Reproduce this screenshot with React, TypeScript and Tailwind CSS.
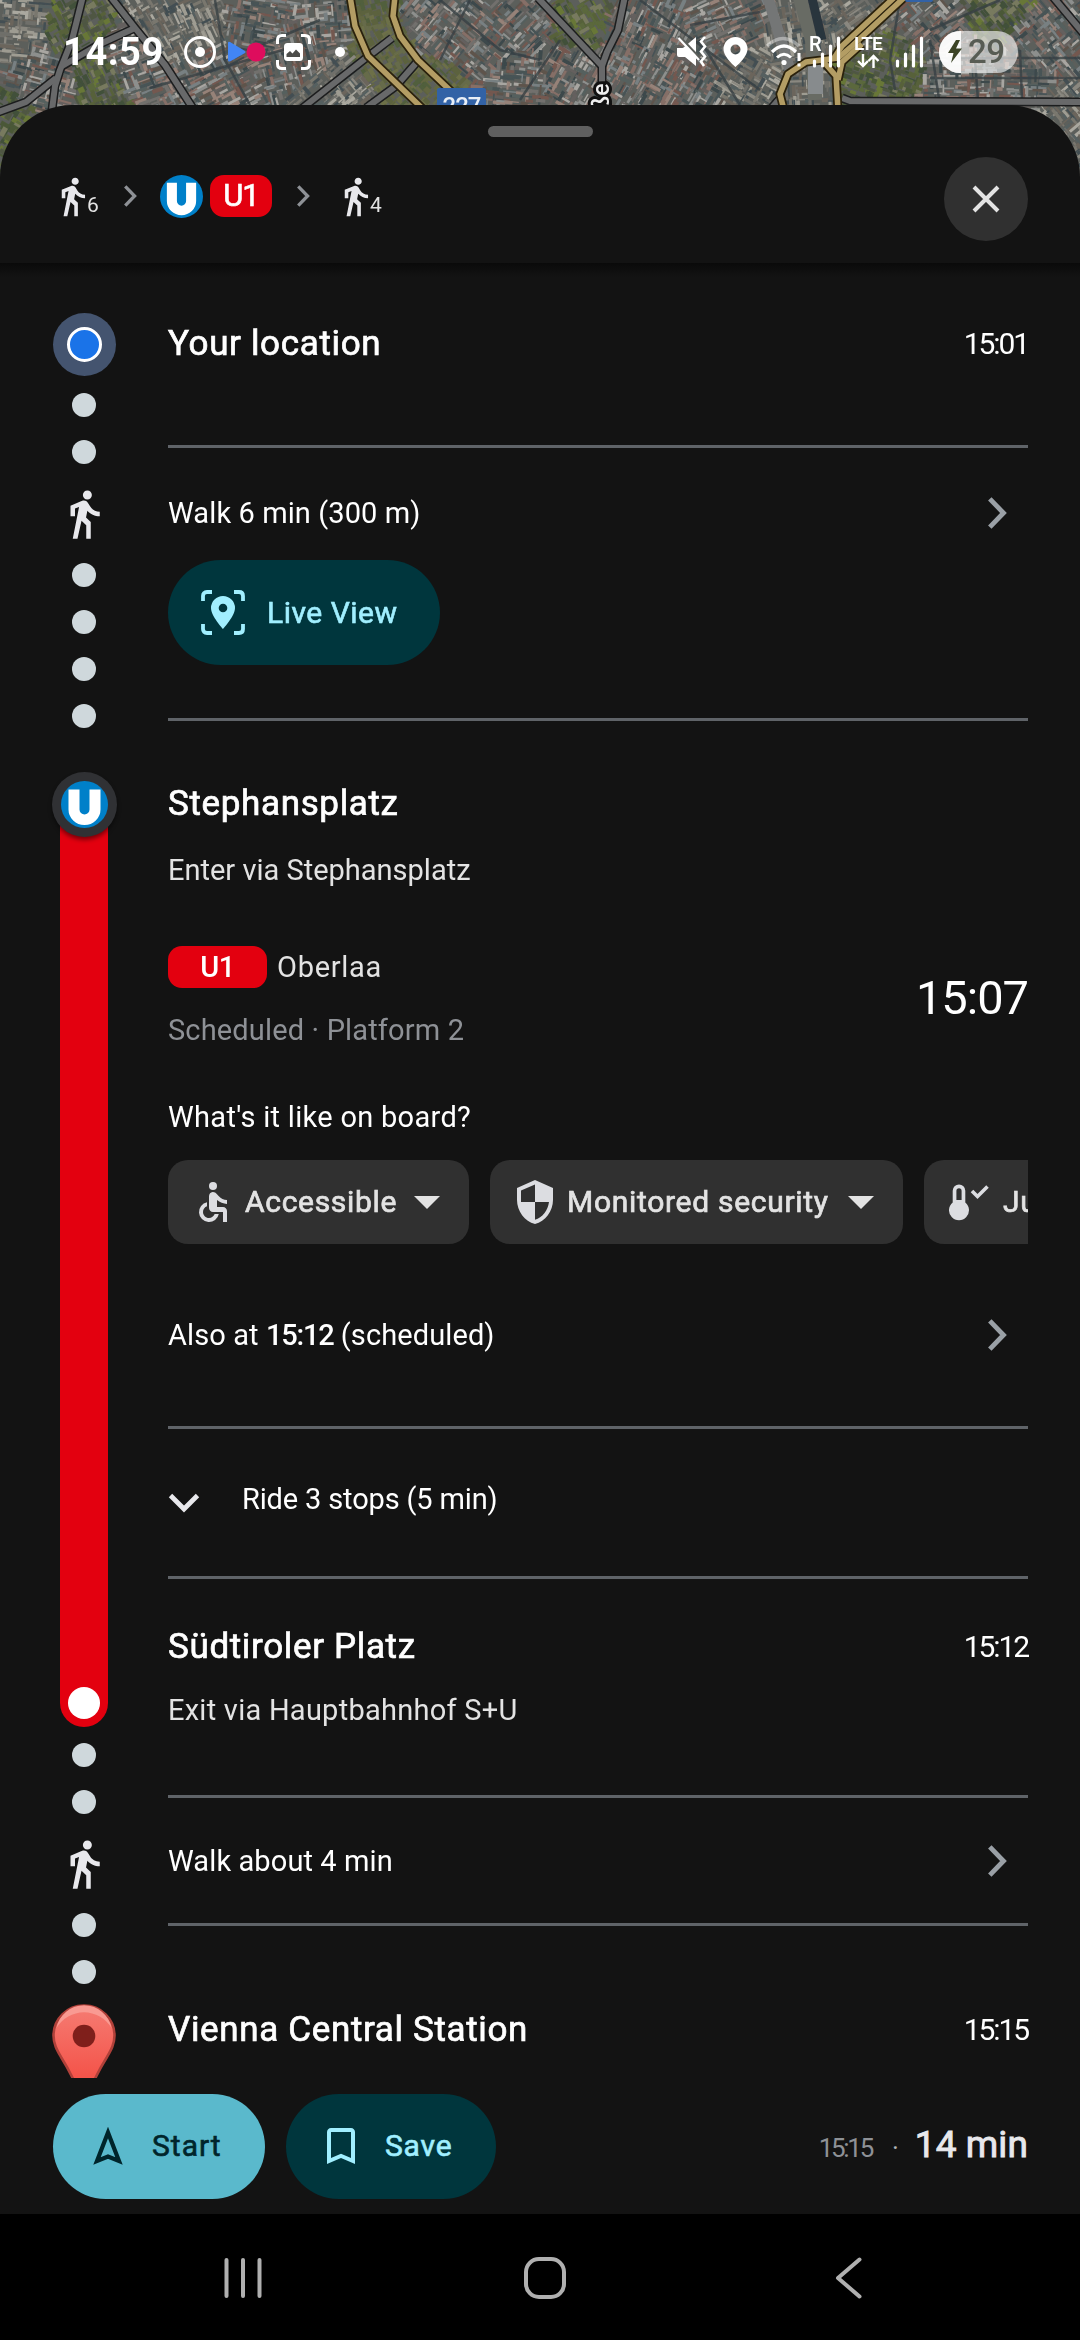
import React from "react";
import { MdAccessible, MdBookmarkBorder, MdDirectionsWalk, MdSecurity } from "react-icons/md";

/* ---------- Satellite map ---------- */

type Hood = { x: number; y: number; a: number; tone: "roof" | "pale" | "green" | "canal" };

const HOODS: Hood[] = [
  { x: 15, y: 25, a: 5, tone: "pale" },
  { x: 45, y: 80, a: 15, tone: "roof" },
  { x: 80, y: 32, a: 60, tone: "green" },
  { x: 10, y: 130, a: 30, tone: "green" },
  { x: 100, y: 75, a: 65, tone: "green" },
  { x: 125, y: 60, a: -20, tone: "roof" },
  { x: 160, y: 20, a: 60, tone: "pale" },
  { x: 190, y: 25, a: 65, tone: "pale" },
  { x: 215, y: 80, a: -28, tone: "roof" },
  { x: 260, y: 20, a: 10, tone: "roof" },
  { x: 300, y: 55, a: 75, tone: "roof" },
  { x: 330, y: 90, a: -40, tone: "pale" },
  { x: 372, y: 10, a: 75, tone: "canal" },
  { x: 385, y: 48, a: 60, tone: "canal" },
  { x: 425, y: 92, a: 45, tone: "canal" },
  { x: 330, y: 15, a: -5, tone: "roof" },
  { x: 430, y: 20, a: -50, tone: "roof" },
  { x: 480, y: 40, a: 40, tone: "roof" },
  { x: 520, y: 85, a: 5, tone: "roof" },
  { x: 530, y: 15, a: -45, tone: "roof" },
  { x: 573, y: 15, a: 60, tone: "green" },
  { x: 570, y: 80, a: -60, tone: "roof" },
  { x: 640, y: 30, a: -65, tone: "roof" },
  { x: 690, y: 80, a: -60, tone: "roof" },
  { x: 730, y: 25, a: -25, tone: "roof" },
  { x: 750, y: 80, a: 30, tone: "pale" },
  { x: 800, y: 40, a: 80, tone: "pale" },
  { x: 815, y: 90, a: 88, tone: "pale" },
  { x: 860, y: 15, a: -35, tone: "pale" },
  { x: 855, y: 82, a: 20, tone: "green" },
  { x: 890, y: 60, a: 20, tone: "green" },
  { x: 930, y: 20, a: -40, tone: "roof" },
  { x: 960, y: 80, a: 0, tone: "roof" },
  { x: 1020, y: 85, a: 2, tone: "roof" },
  { x: 1000, y: 5, a: 50, tone: "green" },
  { x: 1040, y: 40, a: 50, tone: "roof" },
  { x: 1065, y: 120, a: 50, tone: "pale" },
];

const TONES: Record<Hood["tone"], string[]> = {
  roof: ["#8b7169", "#9c857c", "#66605f", "#3a464b", "#465257", "#74726f", "#929492", "#775850", "#56605f", "#b0ada8", "#5f534c", "#7b8386"],
  pale: ["#8f8c84", "#a5a298", "#72716c", "#566062", "#7d7971", "#424e52", "#b2afa6", "#6e665d"],
  green: ["#4a5836", "#5b693a", "#6a7a36", "#414f37", "#586238", "#7b7d60", "#4f5742"],
  canal: ["#65683f", "#5d633c", "#6f7247", "#515f3a", "#686c48"],
};

function makeRoofs() {
  let s = 90217;
  const rnd = () => {
    s = (s * 1664525 + 1013904223) % 4294967296;
    return s / 4294967296;
  };
  const out: { x: number; y: number; w: number; h: number; a: number; c: string }[] = [];
  for (let gy = 0; gy < 185; gy += 5) {
    for (let gx = 0; gx < 1084; gx += 6) {
      if (gy > 106 && gx > 70 && gx < 1010) continue;
      const x = gx + rnd() * 6;
      const y = gy + rnd() * 5;
      let best = HOODS[0];
      let d = Infinity;
      for (const h of HOODS) {
        const q = (h.x - x) ** 2 + (h.y - y) ** 2;
        if (q < d) {
          d = q;
          best = h;
        }
      }
      const t = TONES[best.tone];
      const soft = best.tone === "canal" || best.tone === "green";
      const cross = rnd() > 0.7 ? 90 : 0;
      out.push({
        x,
        y,
        w: 5 + rnd() * (soft ? 6 : 12),
        h: 1.4 + rnd() * (soft ? 5 : 2.6),
        a: best.a + cross,
        c: t[Math.floor(rnd() * t.length)],
      });
    }
  }
  return out;
}

const ROOFS = makeRoofs();

const GREY_ROADS = [
  "M83 -4L72 40L60 70L55 86L52 110",
  "M56 78L26 102L-4 113",
  "M110 -4L135 28L165 65L194 110",
  "M135 28L100 44L62 66",
  "M300 110L366 58L392 38",
  "M417 62L396 86L366 108",
  "M538 -2L570 32L602 66",
  "M625 -4L618 30L607 52L602 66L602 90",
  "M842 98L850 101L1084 102",
  "M770 110L782 96",
  "M1053 -3L1084 34",
];

const GOLD_ROADS = [
  "M350 -4L355 26L368 56L395 82L424 110",
  "M395 -4L393 16L400 36L418 60L454 94",
  "M908 -6L852 46L838 58L806 62L788 74L780 94L784 110",
  "M898 -6L842 46L834 58",
  "M822 60L836 76L838 110",
  "M862 44L842 62L838 80",
];

function SatelliteMap() {
  return (
    <svg width="1080" height="190" viewBox="0 0 1080 190" className="block">
      <defs>
        <filter id="soft" x="0" y="0" width="100%" height="100%">
          <feGaussianBlur stdDeviation="0.7" />
        </filter>
      </defs>
      <rect width="1080" height="190" fill="#5c5f5b" />
      <g filter="url(#soft)" opacity="0.92">
        {ROOFS.map((r, i) => (
          <rect key={i} x={-r.w / 2} y={-r.h / 2} width={r.w} height={r.h} fill={r.c} transform={`translate(${r.x.toFixed(1)} ${r.y.toFixed(1)}) rotate(${r.a})`} />
        ))}
        <g fill="none" stroke="#343d42" strokeWidth="2.5" opacity="0.8">
          <path d="M215 0L225 60L250 105M250 50L320 20M150 88L300 45M440 0L500 50L540 60M470 0L440 60M520 100L560 40M640 0L760 90M700 40L740 105M690 25L760 12M900 0L890 60L895 90M930 40L940 105M975 60L978 100M1020 50L1022 100M930 58L1080 58M930 78L1080 78M930 30L1000 0" />
        </g>
        <g fill="none">
          <path d="M768 -2L790 70" stroke="#77787a" strokeWidth="11" />
          <path d="M800 -2L812 40L815 100" stroke="#6b6c66" strokeWidth="14" />
          <path d="M812 -2L822 40" stroke="#28303a" strokeWidth="9" />
          <rect x="808" y="62" width="15" height="32" fill="#8c8f92" />
        </g>
      </g>
      <g fill="none" strokeLinejoin="round">
        {GREY_ROADS.map((d) => (
          <path key={d} d={d} stroke="#1c1d1e" strokeWidth="9" />
        ))}
        {GREY_ROADS.map((d) => (
          <path key={d} d={d} stroke="#68696a" strokeWidth="6" />
        ))}
        {GOLD_ROADS.map((d) => (
          <path key={d} d={d} stroke="#2a210c" strokeWidth="9" />
        ))}
        {GOLD_ROADS.map((d) => (
          <path key={d} d={d} stroke="#b39d64" strokeWidth="5.5" />
        ))}
      </g>
      <rect x="437" y="88" width="49" height="30" rx="2" fill="#3262a6" />
      <text x="461.500" y="114" textAnchor="middle" fontFamily="Roboto, sans-serif" fontSize="24" fontWeight="500" letterSpacing="-1" fill="#e8eef6">227</text>
      <rect x="905" y="-10" width="28" height="12" rx="2" fill="#3262a6" />
      <text transform="translate(609 110) rotate(-90)" fontFamily="Roboto, sans-serif" fontSize="23" fontWeight="500" fill="#eeeeee" stroke="#111111" strokeWidth="6" style={{ paintOrder: "stroke" }}>ße</text>
    </svg>
  );
}

/* ---------- Status bar ---------- */

function StatusBar() {
  return (
    <div className="absolute inset-x-0 top-0 flex h-[104px] items-center pl-[63px] pr-[62px] text-white">
      <span className="w-[121px] text-[38px] leading-[44px] font-bold tracking-[0.6px]">14:59</span>
      <svg width="32" height="34" viewBox="0 0 32 34" className="mb-px">
        <circle cx="16" cy="17" r="14.500" fill="none" stroke="#fff" strokeWidth="3" />
        <circle cx="16" cy="17" r="5" fill="#fff" />
      </svg>
      <svg width="38" height="24" viewBox="0 0 38 24" className="ml-3">
        <path d="M0 3Q0 1 2 2L17 11Q18 12 17 13L2 21.500Q0 22 0 20Z" fill="#4285f4" />
        <circle cx="28" cy="12" r="9.500" fill="#de0d5d" />
      </svg>
      <svg width="35" height="36" viewBox="0 0 35 36" className="ml-[10px]">
        <path d="M1.500 10V6Q1.500 1.500 6 1.500H10M25 1.500H29Q33.500 1.500 33.500 6V10M33.500 26V30Q33.500 34.500 29 34.500H25M10 34.500H6Q1.500 34.500 1.500 30V26" fill="none" stroke="#fff" strokeWidth="3" />
        <rect x="8" y="9" width="19" height="18" rx="3.500" fill="#fff" />
        <path d="M10.500 23V20L14 17L16.500 19.500L20 15.500L24 19.500V23Z" fill="#4d4d4a" />
      </svg>
      <svg width="10" height="10" viewBox="0 0 10 10" className="ml-6">
        <circle cx="5" cy="5" r="5" fill="#fff" />
      </svg>
      <div className="flex-1" />
      <svg width="30" height="32" viewBox="0 0 30 32">
        <path d="M0 12H6L19 1V30L8 21H2Q0 21 0 19Z" fill="#fff" />
        <path d="M1 -1L22 21" stroke="#5c5f5b" strokeWidth="2.500" />
        <path d="M1.500 2L22 24" stroke="#fff" strokeWidth="2.200" />
        <path d="M28 1L24 5.500L28 10.500L24 15.500L28 20.500L24 25.500L27 30" fill="none" stroke="#fff" strokeWidth="2.600" />
      </svg>
      <svg width="25" height="32" viewBox="0 0 25 32" className="ml-[16px]">
        <path fillRule="evenodd" d="M12.500 1A12 12 0 0 0 0.500 13C0.500 21 12.500 31 12.500 31S24.500 21 24.500 13A12 12 0 0 0 12.500 1ZM12.500 8.500A5 5 0 1 1 12.500 18.500A5 5 0 1 1 12.500 8.500Z" fill="#fff" />
      </svg>
      <svg width="36" height="32" viewBox="0 0 36 32" className="ml-[18px]">
        <path d="M1 10Q17 -5 33 10" fill="none" stroke="#fff" strokeOpacity="0.4" strokeWidth="3.500" />
        <path d="M6 16Q18 4 30 16" fill="none" stroke="#fff" strokeWidth="3.200" />
        <path d="M11 21.500Q18 15 25 21.500" fill="none" stroke="#fff" strokeWidth="3" />
        <circle cx="18" cy="26.500" r="2.600" fill="#fff" />
        <path d="M33 17V25M33 27.500V30.500" stroke="#fff" strokeWidth="3" />
      </svg>
      <div className="relative ml-[10px] h-[32px] w-[30px]">
        <span className="absolute -left-[3px] -top-[2px] text-[20px] leading-[20px] font-semibold">R</span>
        <svg width="30" height="32" viewBox="0 0 30 32">
          <path d="M2.500 25V30M10.500 18V30M18.500 10V30M26.500 2V30" stroke="#fff" strokeWidth="3.200" strokeLinecap="round" />
        </svg>
      </div>
      <div className="ml-[9px] flex h-[34px] w-[34px] flex-col items-center">
        <span className="text-[19px] leading-[18px] font-semibold tracking-[-0.8px]">LTE</span>
        <svg width="24" height="14" viewBox="0 0 24 14" className="mt-px shrink-0">
          <path d="M7 0V12M2 7L7 12L12 7M17.500 14V2M12.500 7L17.500 2L22.500 7" fill="none" stroke="#fff" strokeWidth="2.400" />
        </svg>
      </div>
      <svg width="30" height="32" viewBox="0 0 30 32" className="ml-[10px]">
        <path d="M2.500 25V30M10.500 18V30M18.500 10V30M26.500 2V30" stroke="#fff" strokeWidth="3.200" strokeLinecap="round" />
      </svg>
      <div className="relative ml-[14px] flex h-[42px] w-[79px] items-center overflow-hidden rounded-full bg-white/60">
        <div className="absolute inset-y-0 left-0 w-[22px] bg-white/90" />
        <svg width="14" height="24" viewBox="0 0 14 24" className="relative ml-[9px]">
          <path d="M8 0L0 13H5.500L3 23L14 8.500H8L12 0Z" fill="#3c4426" />
        </svg>
        <span className="relative ml-[6px] text-[33px] leading-[40px] font-medium tracking-[-0.5px] text-[#585c54]">29</span>
      </div>
    </div>
  );
}

/* ---------- Icons ---------- */

function Chevron({ className = "" }: { className?: string }) {
  return (
    <svg viewBox="0 0 19 32" className={className}>
      <path d="M1.800 1.800L15.500 16L1.800 30.200" fill="none" stroke="currentColor" strokeWidth="4.800" />
    </svg>
  );
}

function UBahn({ className = "" }: { className?: string }) {
  return (
    <svg viewBox="-23.500 -23.500 47 47" className={className}>
      <circle r="23.500" fill="#0080c9" />
      <path d="M-16 -15H-5V5A5 5 0 0 0 5 5V-15H16V5A16 15.500 0 0 1 -16 5Z" fill="#fff" />
    </svg>
  );
}

function LiveViewIcon() {
  return (
    <svg width="44" height="45" viewBox="0 0 44 45">
      <path d="M2 11V6Q2 2 6 2H11M33 2H38Q42 2 42 6V11M42 34V39Q42 43 38 43H33M11 43H6Q2 43 2 39V34" fill="none" stroke="#a1efff" strokeWidth="3.800" />
      <path fillRule="evenodd" d="M22 6A12 12 0 0 0 10 18C10 26 22 39 22 39S34 26 34 18A12 12 0 0 0 22 6ZM22 13.700A4.300 4.300 0 1 1 22 22.300A4.300 4.300 0 1 1 22 13.700Z" fill="#a1efff" />
    </svg>
  );
}

function ThermoIcon() {
  return (
    <svg width="40" height="37" viewBox="0 0 40 37" className="shrink-0">
      <path fillRule="evenodd" d="M10 0.500A6.300 6.300 0 0 0 3.700 6.800V18.500A10 10 0 1 0 16.300 18.500V6.800A6.300 6.300 0 0 0 10 0.500ZM10 4.300A2.600 2.600 0 0 0 7.400 6.900V16H12.600V6.900A2.600 2.600 0 0 0 10 4.300Z" fill="#dcdde1" />
      <path d="M23 7L28.500 12.500L38.500 2.500" fill="none" stroke="#dcdde1" strokeWidth="3.600" />
    </svg>
  );
}

function Caret() {
  return (
    <svg width="26" height="13" viewBox="0 0 26 13" className="shrink-0">
      <path d="M0 0H26L13 13Z" fill="#e3e3e3" />
    </svg>
  );
}

function DestinationPin() {
  return (
    <svg width="64" height="92" viewBox="0 0 64 92" className="block shrink-0">
      <defs>
        <linearGradient id="pin" x1="0" y1="0" x2="0" y2="1">
          <stop offset="0" stopColor="#f57c73" />
          <stop offset="0.800" stopColor="#f4544a" />
        </linearGradient>
      </defs>
      <path d="M32 1.500C15 1.500 1.500 15 1.500 31.500C1.500 40 5 46 9 53C14 61 18 68 22 77Q27 90 32 90T42 77C46 68 50 61 55 53C59 46 62.500 40 62.500 31.500C62.500 15 49 1.500 32 1.500Z" fill="url(#pin)" stroke="#b04039" strokeWidth="2.600" />
      <path d="M4.500 24A28 28 0 0 1 59.500 24A32 32 0 0 0 4.500 24Z" fill="#f99a92" />
      <circle cx="32" cy="32" r="11.300" fill="#7f1f1b" />
    </svg>
  );
}

/* ---------- Rail ---------- */

function Dots({ count }: { count: number }) {
  return (
    <div className="flex shrink-0 flex-col gap-[23px]">
      {Array.from({ length: count }, (_, i) => (
        <div key={i} className="size-6 rounded-full bg-[#cfd8dc]" />
      ))}
    </div>
  );
}

function Walker() {
  return (
    <div className="flex h-[99px] shrink-0 items-center">
      <MdDirectionsWalk className="size-[54px] text-[#e8e8ec]" />
    </div>
  );
}

function Rail() {
  return (
    <div className="flex w-[168px] shrink-0 flex-col items-center pt-[50px]">
      <div className="flex size-[63px] shrink-0 items-center justify-center rounded-full bg-[#44546f]">
        <div className="size-[35px] rounded-full border-[3px] border-white bg-[#1a73e8]" />
      </div>
      <div className="h-[17px] shrink-0" />
      <Dots count={2} />
      <Walker />
      <Dots count={4} />
      <div className="z-10 mt-11 flex size-[65px] shrink-0 items-center justify-center rounded-full bg-[#303134] shadow-[0_3px_4px_rgba(0,0,0,0.45)]">
        <UBahn className="size-[47px]" />
      </div>
      <div className="-mt-8 flex h-[922px] w-12 shrink-0 flex-col items-center justify-end rounded-b-full bg-[#e3000f] pb-2">
        <div className="size-8 rounded-full bg-white" />
      </div>
      <div className="h-4 shrink-0" />
      <Dots count={2} />
      <Walker />
      <Dots count={2} />
      <div className="h-5 shrink-0" />
      <DestinationPin />
    </div>
  );
}

/* ---------- Steps ---------- */

function Rule({ className }: { className: string }) {
  return <div className={`h-[3px] shrink-0 bg-[#5f6368] ${className}`} />;
}

function Place({ name, time, className }: { name: string; time?: string; className: string }) {
  return (
    <div className={`flex h-10 shrink-0 items-center justify-between text-white ${className}`}>
      <span className="text-[35px] leading-10 tracking-[0.65px] [-webkit-text-stroke:0.7px_currentColor]">{name}</span>
      {time && <span className="text-[30px] leading-10 tracking-[-2.1px]">{time}</span>}
    </div>
  );
}

function LinkRow({ children, className }: { children: React.ReactNode; className: string }) {
  return (
    <div className={`flex h-10 shrink-0 items-center justify-between pr-[21px] text-[29px] leading-10 text-white ${className}`}>
      <span className="tracking-[0.1px]">{children}</span>
      <Chevron className="h-8 w-[19px] text-[#9aa0a6]" />
    </div>
  );
}

function Chip({ icon, label, caret, className }: { icon: React.ReactNode; label: string; caret?: boolean; className: string }) {
  return (
    <div className={`flex h-[84px] shrink-0 items-center rounded-[20px] bg-[#303030] ${className}`}>
      {icon}
      <span className="text-[30px] leading-10 tracking-[0.7px] whitespace-nowrap text-[#e3e3e3] [-webkit-text-stroke:0.7px_currentColor]">{label}</span>
      {caret && (
        <>
          <span className="flex-1" />
          <Caret />
        </>
      )}
    </div>
  );
}

function Steps() {
  return (
    <div className="flex w-[860px] flex-col">
      <Place name="Your location" time="15:01" className="mt-[61px]" />
      <Rule className="mt-[81px]" />

      <LinkRow className="mt-[45px]">Walk 6 min (300 m)</LinkRow>
      <div className="mt-[27px] flex h-[105px] w-[272px] shrink-0 items-center gap-[22px] rounded-full bg-[#00363d] pl-[33px]">
        <LiveViewIcon />
        <span className="text-[30px] leading-10 tracking-[0.5px] text-[#a1efff] [-webkit-text-stroke:0.6px_currentColor]">Live View</span>
      </div>
      <Rule className="mt-[53px]" />

      <Place name="Stephansplatz" className="mt-[63px]" />
      <div className="mt-[26px] h-10 shrink-0 text-[29px] leading-10 text-[#e3e3e3]">Enter via Stephansplatz</div>
      <div className="mt-14 flex h-[104px] shrink-0 items-center justify-between">
        <div className="flex flex-col gap-[22px]">
          <div className="flex h-[42px] items-center gap-[10px]">
            <span className="h-[42px] w-[99px] rounded-[14px] bg-[#e3000f] text-center text-[29px] leading-[42px] font-medium tracking-[-0.5px] text-white">U1</span>
            <span className="text-[29px] leading-10 tracking-[0.7px] text-[#e3e3e3]">Oberlaa</span>
          </div>
          <span className="h-10 text-[29px] leading-10 tracking-[0.15px] text-[#8e9196]">Scheduled · Platform 2</span>
        </div>
        <span className="text-[47px] leading-[54px] tracking-[-1px] text-white">15:07</span>
      </div>
      <div className="mt-[47px] h-10 shrink-0 text-[29px] leading-10 tracking-[0.3px] text-white">What's it like on board?</div>
      <div className="mt-[23px] flex shrink-0 gap-[21px] overflow-hidden">
        <Chip
          className="w-[301px] pr-[29px] pl-[21px]"
          icon={<MdAccessible className="mr-2 size-12 shrink-0 text-[#dcdde1]" />}
          label="Accessible"
          caret
        />
        <Chip
          className="w-[413px] pr-[29px] pl-[21px]"
          icon={<MdSecurity className="mr-[8px] size-[48px] shrink-0 text-[#dcdde1]" />}
          label="Monitored security"
          caret
        />
        <Chip
          className="w-[420px] pl-[25px]"
          icon={<span className="mr-[14px]"><ThermoIcon /></span>}
          label="Just right"
        />
      </div>
      <LinkRow className="mt-[71px]">
        Also at <span className="font-medium tracking-[-1.2px]">15:12</span> (scheduled)
      </LinkRow>
      <Rule className="mt-[71px]" />

      <div className="mt-[50px] flex h-10 shrink-0 items-center text-[29px] leading-10 text-white">
        <svg width="32" height="20" viewBox="0 0 32 20" className="mt-2">
          <path d="M2.500 2.500L16 16L29.500 2.500" fill="none" stroke="#e8e8ec" strokeWidth="4.800" />
        </svg>
        <span className="ml-[42px] tracking-[-0.15px]">Ride 3 stops (5 min)</span>
      </div>
      <Rule className="mt-[57px]" />

      <Place name="Südtiroler Platz" time="15:12" className="mt-12" />
      <div className="mt-[23px] h-10 shrink-0 text-[29px] leading-10 tracking-[0.25px] text-[#e3e3e3]">Exit via Hauptbahnhof S+U</div>
      <Rule className="mt-[65px]" />

      <LinkRow className="mt-[43px]">Walk about 4 min</LinkRow>
      <Rule className="mt-[42px]" />

      <Place name="Vienna Central Station" time="15:15" className="mt-[84px]" />
    </div>
  );
}

/* ---------- Header ---------- */

function WalkLeg({ minutes }: { minutes: string }) {
  return (
    <div className="flex w-[50px] items-end">
      <MdDirectionsWalk className="size-[43px] shrink-0 text-[#e8e8ec]" />
      <span className="-ml-[7px] text-[21px] leading-[26px] text-[#e3e3e3]">{minutes}</span>
    </div>
  );
}

function Header() {
  return (
    <div className="h-[158px] shrink-0">
      <div className="mx-auto mt-[21px] h-[11px] w-[105px] rounded-full bg-[#5f5f5f]" />
      <div className="flex justify-between pr-[52px] pl-[51px]">
        <div className="mt-[37px] flex h-11 items-center">
          <WalkLeg minutes="6" />
          <Chevron className="ml-[23px] h-[22px] w-[13px] text-[#8e9196]" />
          <UBahn className="ml-[23px] size-[43px]" />
          <span className="ml-[7px] h-[42px] w-[62px] rounded-[14px] bg-[#e3000f] text-center text-[31px] leading-[42px] tracking-[-1px] text-white [-webkit-text-stroke:0.6px_currentColor]">U1</span>
          <Chevron className="ml-[25px] h-[22px] w-[13px] text-[#8e9196]" />
          <div className="ml-6">
            <WalkLeg minutes="4" />
          </div>
        </div>
        <div className="mt-5 flex size-[84px] items-center justify-center rounded-full bg-[#303030]">
          <svg width="28" height="28" viewBox="0 0 28 28">
            <path d="M2 2L26 26M26 2L2 26" stroke="#e3e3e3" strokeWidth="4" />
          </svg>
        </div>
      </div>
    </div>
  );
}

/* ---------- Bottom ---------- */

function ActionBar() {
  return (
    <div className="flex h-[136px] shrink-0 items-center bg-[#131313] pr-[52px] pl-[53px]">
      <div className="flex h-[105px] w-[212px] items-center rounded-full bg-[#5ab9cc] pl-[40px] text-[#00252b]">
        <svg width="30" height="38" viewBox="0 0 30 38">
          <path d="M15 5.500L4 34L15 29.500L26 34Z" fill="none" stroke="currentColor" strokeWidth="4.200" />
        </svg>
        <span className="ml-[29px] text-[30px] leading-10 tracking-[1px] [-webkit-text-stroke:0.6px_currentColor]">Start</span>
      </div>
      <div className="ml-[21px] flex h-[105px] w-[210px] items-center rounded-full bg-[#00363d] pl-[31px] text-[#a1efff]">
        <MdBookmarkBorder className="size-12" />
        <span className="ml-[20px] text-[30px] leading-10 tracking-[0.8px] [-webkit-text-stroke:0.6px_currentColor]">Save</span>
      </div>
      <div className="flex flex-1 items-baseline justify-end">
        <span className="text-[26px] leading-10 tracking-[-2.3px] text-[#8e9196]">15:15</span>
        <span className="mr-[16px] ml-[20px] text-[26px] leading-10 text-[#b0b3b8]">·</span>
        <span className="text-[37px] leading-10 tracking-[0.1px] text-[#e8e8ec] [-webkit-text-stroke:0.9px_currentColor]">14 min</span>
      </div>
    </div>
  );
}

function NavBar() {
  return (
    <div className="flex h-[126px] shrink-0 items-start bg-black pt-[43px] pl-[224px]">
      <svg width="38" height="42" viewBox="0 0 38 42">
        <path d="M2.500 3V39M19 3V39M35.500 3V39" stroke="#b0b0b0" strokeWidth="4" strokeLinecap="round" />
      </svg>
      <svg width="42" height="42" viewBox="0 0 42 42" className="ml-[262px]">
        <rect x="2" y="2" width="38" height="38" rx="13" fill="none" stroke="#b0b0b0" strokeWidth="4" />
      </svg>
      <svg width="27" height="42" viewBox="0 0 27 42" className="ml-[269px]">
        <path d="M24.500 2.500L3 21L24.500 39.500" fill="none" stroke="#b0b0b0" strokeWidth="4" strokeLinecap="round" strokeLinejoin="round" />
      </svg>
    </div>
  );
}

export default function App() {
  return (
    <div className="relative flex h-[2340px] w-[1080px] flex-col overflow-hidden bg-[#131313] font-['Roboto',sans-serif]">
      <div className="h-[105px] shrink-0">
        <SatelliteMap />
      </div>
      <StatusBar />
      <div className="relative flex h-[1973px] shrink-0 flex-col overflow-hidden rounded-t-[72px] bg-[#131313]">
        <Header />
        <div className="flex flex-1 overflow-hidden bg-[linear-gradient(#0a0a0a,#131313_14px)]">
          <Rail />
          <Steps />
        </div>
      </div>
      <ActionBar />
      <NavBar />
    </div>
  );
}
